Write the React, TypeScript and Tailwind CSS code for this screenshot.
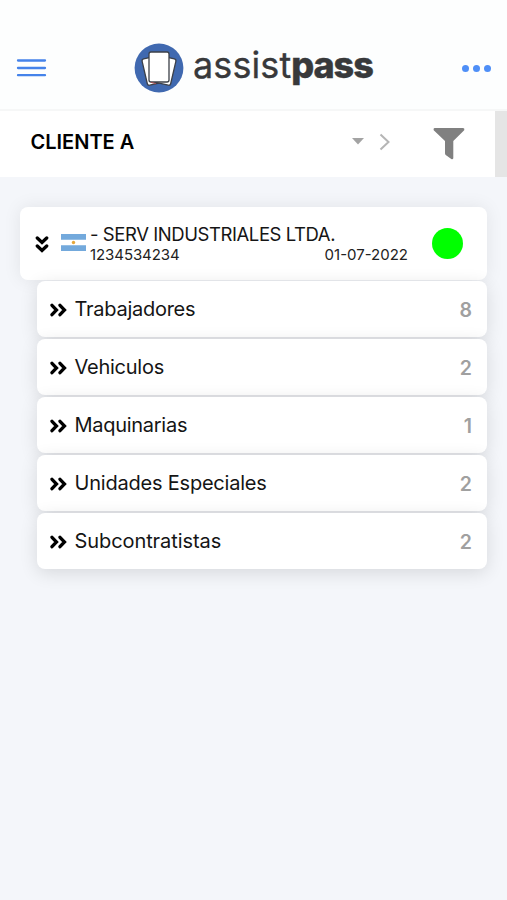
import React from "react";

const items: { label: string; count: number; tracking: string }[] = [
  { label: "Trabajadores", count: 8, tracking: "tracking-[-0.26px]" },
  { label: "Vehiculos", count: 2, tracking: "tracking-[-0.25px]" },
  { label: "Maquinarias", count: 1, tracking: "tracking-[-0.28px]" },
  { label: "Unidades Especiales", count: 2, tracking: "tracking-[-0.21px]" },
  { label: "Subcontratistas", count: 2, tracking: "tracking-[-0.08px]" },
];

function DoubleChevron({ className }: { className: string }) {
  return (
    <svg viewBox="0 0 18 14" className={className} fill="none" stroke="#000" strokeWidth="3.3" strokeLinecap="round" strokeLinejoin="miter">
      <path d="M3 2.3 7.5 7 3 11.7M11 2.3 15.5 7 11 11.7" />
    </svg>
  );
}

function Logo() {
  return (
    <div className="flex items-center">
      <svg viewBox="0 0 50 50" className="h-[50px] w-[50px]">
        <circle cx="25" cy="25" r="24.4" fill="#4069b0" />
        <g fill="#fff" stroke="#3c4048" strokeWidth="1.3">
          <rect x="10.5" y="14" width="18" height="27" rx="2" transform="rotate(-13 19.5 27.5)" />
          <rect x="21.5" y="14" width="18" height="27" rx="2" transform="rotate(13 30.5 27.5)" />
          <rect x="15" y="9" width="20" height="30" rx="2" />
        </g>
        <path d="m17 39.4 5 1.3" stroke="#a84b50" strokeWidth="1" />
      </svg>
      <div className="-mt-[7px] ml-[9px] flex h-10 items-center text-[36px] leading-10 text-[#38393b]">
        <span className="tracking-[0.1px] [-webkit-text-stroke:0.3px_#38393b]">assist</span>
        <span className="font-extrabold tracking-[-1.1px] [-webkit-text-stroke:0.4px_#38393b]">pass</span>
      </div>
    </div>
  );
}

function Flag() {
  return (
    <svg viewBox="0 0 25 17" className="h-[17px] w-[25px] shrink-0">
      <path fill="#fff" d="M0 0h25v17H0z" />
      <path fill="#73a9dc" d="M0 0h25v5.7H0zM0 11.2h25V17H0z" />
      <circle cx="12.5" cy="8.5" r="1.7" fill="#e5a83c" />
    </svg>
  );
}

export default function App() {
  return (
    <div className="flex h-[900px] w-[507px] flex-col overflow-hidden bg-[#f4f6fa] font-['Inter','Liberation_Sans',sans-serif] text-black">
      <header className="flex h-[111px] shrink-0 items-end border-b-2 border-[#f6f7f7] bg-[#fdfefe] pr-[16px] pl-[16px]">
        <button className="mb-[31px] flex h-[20px] w-[31px] items-center" aria-label="Menu">
          <svg viewBox="0 0 31 20" className="h-5 w-[31px]" stroke="#4583ea" strokeWidth="2.3" strokeLinecap="round">
            <path d="M2 2.5h27M2 10h27M2 17.2h27" />
          </svg>
        </button>
        <div className="mb-[16px] ml-[87px] flex-1">
          <Logo />
        </div>
        <button className="mb-[37px] flex gap-[4px]" aria-label="More">
          <i className="size-[7px] rounded-full bg-[#4f8ff7]" />
          <i className="size-[7px] rounded-full bg-[#4f8ff7]" />
          <i className="size-[7px] rounded-full bg-[#4f8ff7]" />
        </button>
      </header>

      <div className="flex h-[66px] shrink-0 bg-white">
        <div className="flex flex-1 items-center pl-[30.5px]">
          <span className="-mt-[5px] flex-1 text-[20px] leading-6 font-semibold tracking-[0px]">CLIENTE A</span>
          <svg viewBox="0 0 12 7" className="mr-[15px] -mt-[5px] h-[7px] w-[12px]" fill="#a3a3a3">
            <path d="M0 0h12L6 6.5z" />
          </svg>
          <svg viewBox="0 0 12 18" className="-mt-[4px] h-[18px] w-[12px]" fill="none" stroke="#b5b5b5" strokeWidth="2">
            <path d="m1.5 1.5 8 7.5-8 7.5" />
          </svg>
          <svg viewBox="0 0 32 32" className="mr-[30px] ml-[42px] h-[32px] w-[32px]" fill="#808080">
            <path d="M1.5 0h28.7q1.8.4 1 2.2L20.3 13.1v17.2q-.5 1.6-2 .8l-5.6-4.2q-.7-.6-.7-1.6V13.1L.7 2.2Q0 .5 1.5 0z" />
          </svg>
        </div>
        <div className="w-[12px] bg-[#e5e5e5]" />
      </div>

      <main className="pt-[30px] pr-[20px] pl-[20px]">
        <section className="flex h-[73px] items-center rounded-[8px] bg-white pl-[12.5px] shadow-[0_0_18px_rgba(0,0,0,0.08)]">
          <DoubleChevron className="h-[14px] w-[18px] rotate-90" />
          <div className="-mt-[2px] ml-[10px] flex">
            <Flag />
          </div>
          <div className="-mt-px ml-[4.5px] w-[318px]">
            <p className="text-[18.5px] leading-[22px] tracking-[-0.43px] whitespace-nowrap text-[#151515]">- SERV INDUSTRIALES LTDA.</p>
            <div className="flex justify-between text-[15px] leading-[19px] text-[#222]">
              <span className="tracking-[-0.08px]">1234534234</span>
              <span>01-07-2022</span>
            </div>
          </div>
          <span className="ml-[24px] size-[31px] rounded-full bg-[#00ff00]" />
        </section>

        <ul className="mt-px ml-[17px] flex flex-col gap-[2px]">
          {items.map((item) => (
            <li
              key={item.label}
              className="flex h-[56px] items-center rounded-[8px] bg-white pr-[15px] pl-[12px] shadow-[0_4px_18px_rgba(0,0,0,0.12)]"
            >
              <DoubleChevron className="mt-px h-[14px] w-[18px]" />
              <span className={`ml-[7.5px] flex-1 text-[20px] leading-6 text-[#151515] ${item.tracking}`}>{item.label}</span>
              <span className="mt-[2px] text-[19.5px] leading-6 font-semibold text-[#a0a0a0]">{item.count}</span>
            </li>
          ))}
        </ul>
      </main>
    </div>
  );
}
